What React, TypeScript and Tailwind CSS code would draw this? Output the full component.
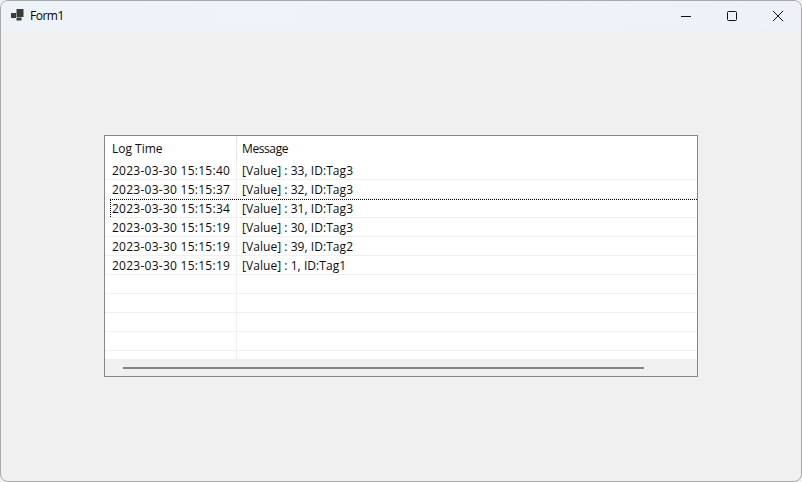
import React from 'react';

const rows = [
  { time: '2023-03-30 15:15:40', message: '[Value] : 33, ID:Tag3' },
  { time: '2023-03-30 15:15:37', message: '[Value] : 32, ID:Tag3' },
  { time: '2023-03-30 15:15:34', message: '[Value] : 31, ID:Tag3', focused: true },
  { time: '2023-03-30 15:15:19', message: '[Value] : 30, ID:Tag3' },
  { time: '2023-03-30 15:15:19', message: '[Value] : 39, ID:Tag2' },
  { time: '2023-03-30 15:15:19', message: '[Value] : 1, ID:Tag1' },
  { time: '', message: '' },
  { time: '', message: '' },
  { time: '', message: '' },
  { time: '', message: '' },
];

function Row({ time, message, focused }: { time: string; message: string; focused?: boolean }) {
  return (
    <div className="relative flex h-[19px] border-b border-[#f0f0f0]">
      <div className="w-[132px] shrink-0 border-r border-[#f0f0f0] pl-[7px] leading-[20px] tracking-[0.26px]">{time}</div>
      <div className="pl-[5px] leading-[20px] tracking-[0.05px]">{message}</div>
      {focused && (
        <div className="absolute left-[5px] right-0 top-0 h-[18px] border-t border-l border-dotted border-black" />
      )}
    </div>
  );
}

export default function App() {
  return (
    <div className="h-[482px] w-[802px] overflow-hidden bg-[#f0f0f0] font-['Open_Sans','Noto_Sans',sans-serif] text-[12px] text-[#0c0c0c]">
      <div className="flex h-full flex-col overflow-hidden rounded-[8px] border border-[#a9a9a9]">
        <div className="flex h-[30px] shrink-0 items-center bg-gradient-to-r from-[#edf4f8] to-[#eef2f8]">
          <svg width="13" height="12" viewBox="0 0 13 12" className="ml-[10px] mt-[-2px]">
            <path d="M0 4h5v5H0z M5.5 0H12.5v8H5.5z M5.5 8.5H10.5V11.5H5.5z" fill="#3c3c3c" />
          </svg>
          <span className="ml-[6px] text-[12px] tracking-[-0.5px] text-black">Form1</span>
          <div className="ml-auto flex">
            <svg width="12" height="12" viewBox="0 0 12 12" className="mr-[34px]">
              <path d="M1 6.5h10" stroke="#111" strokeWidth="1" />
            </svg>
            <svg width="12" height="12" viewBox="0 0 12 12" className="mr-[34px]">
              <rect x="1.5" y="1.5" width="9" height="9" rx="1" fill="none" stroke="#111" strokeWidth="1" />
            </svg>
            <svg width="12" height="12" viewBox="0 0 12 12" className="mr-[17px]">
              <path d="M1 1l10 10M11 1L1 11" stroke="#111" strokeWidth="1" />
            </svg>
          </div>
        </div>
        <div className="ml-[103px] mt-[104px] flex h-[242px] w-[594px] flex-col border border-[#82878f] bg-white">
          <div className="flex h-[25px] shrink-0">
            <div className="w-[132px] shrink-0 border-r border-[#e5e5e5] pl-[7px] leading-[25px]">Log Time</div>
            <div className="pl-[5px] leading-[25px] tracking-[-0.4px]">Message</div>
          </div>
          <div className="flex-1 overflow-hidden">
            {rows.map((row, i) => (
              <Row key={i} {...row} />
            ))}
            <div className="h-[8px] w-[132px] border-r border-[#f0f0f0]" />
          </div>
          <div className="flex h-[17px] shrink-0 items-center bg-[#f0f0f0] pl-[18px]">
            <div className="h-[2px] w-[521px] bg-[#858585]" />
          </div>
        </div>
      </div>
    </div>
  );
}
